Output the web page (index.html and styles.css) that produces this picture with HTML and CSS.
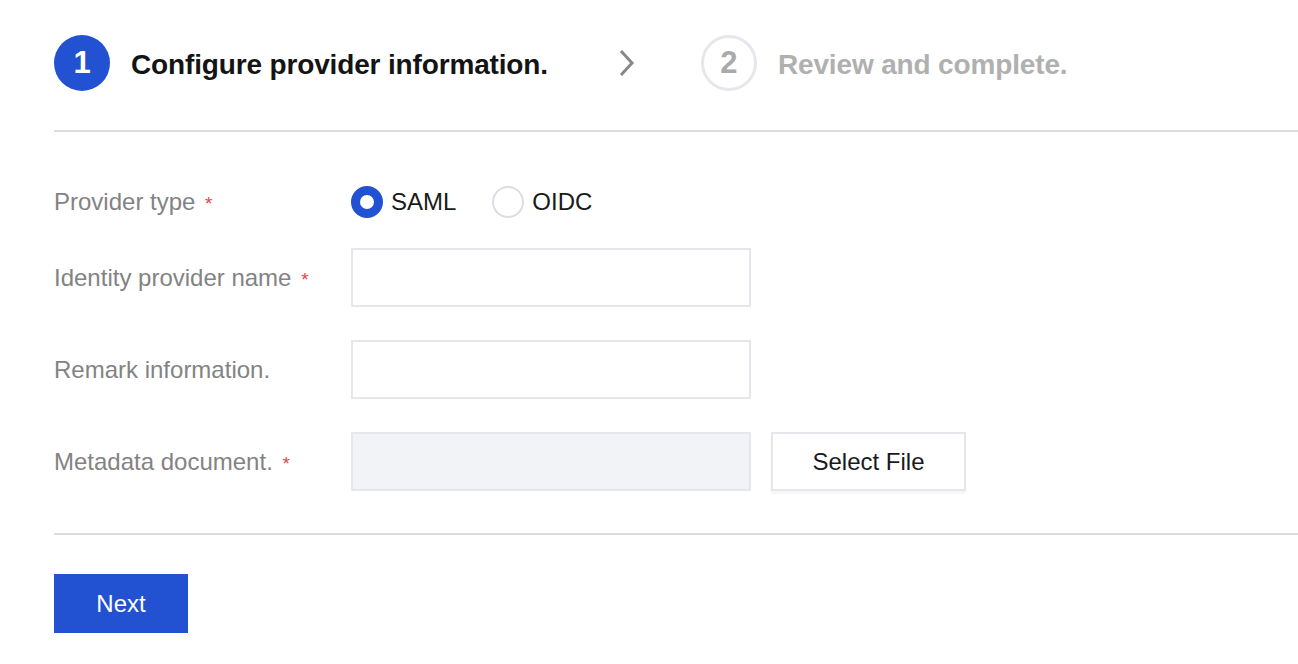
FILE: index.html
```html
<!DOCTYPE html>
<html>
<head>
<meta charset="utf-8">
<link rel="stylesheet" href="styles.css">
</head>
<body>
<div class="page">
  <div class="steps">
    <div class="step active">
      <span class="num">1</span>
      <span class="step-title">Configure provider information.</span>
    </div>
    <svg class="chev" width="16" height="28" viewBox="0 0 16 28"><path d="M2 2 L13 14 L2 26" fill="none" stroke="#888" stroke-width="3"/></svg>
    <div class="step pending">
      <span class="num">2</span>
      <span class="step-title">Review and complete.</span>
    </div>
  </div>
  <div class="divider"></div>
  <form class="form">
    <div class="row row-radio">
      <div class="label">Provider type <span class="req">*</span></div>
      <div class="radios">
        <label class="radio"><span class="dot checked"></span>SAML</label>
        <label class="radio"><span class="dot"></span>OIDC</label>
      </div>
    </div>
    <div class="row">
      <div class="label">Identity provider name <span class="req">*</span></div>
      <div class="input"></div>
    </div>
    <div class="row">
      <div class="label">Remark information.</div>
      <div class="input"></div>
    </div>
    <div class="row">
      <div class="label">Metadata document. <span class="req">*</span></div>
      <div class="input disabled"></div>
      <button type="button" class="btn-file">Select File</button>
    </div>
  </form>
  <div class="divider divider2"></div>
  <button type="button" class="btn-next">Next</button>
</div>
</body>
</html>
```
FILE: styles.css
```css
html, body {
  margin: 0;
  padding: 0;
  background: #fff;
}
body {
  font-family: "Liberation Sans", Arial, sans-serif;
}
.page {
  padding: 35px 0 0 54px;
}
.steps {
  display: flex;
  align-items: center;
  height: 56px;
}
.step {
  display: flex;
  align-items: center;
}
.num {
  box-sizing: border-box;
  width: 56px;
  height: 56px;
  border-radius: 50%;
  display: flex;
  align-items: center;
  justify-content: center;
  font-size: 31px;
  font-weight: bold;
}
.step.active .num {
  background: #2252d2;
  color: #fff;
}
.step.pending .num {
  border: 3px solid #e6e7ec;
  color: #aaa;
}
.step-title {
  margin-left: 21px;
  margin-top: 3px;
  font-size: 28px;
  font-weight: bold;
  letter-spacing: -0.15px;
}
.step.active .step-title {
  color: #141414;
}
.step.pending .step-title {
  color: #b0b0b0;
}
.chev {
  margin-left: 71px;
  margin-right: 66px;
  margin-top: -1px;
}
.divider {
  height: 2px;
  background: #dcdcdc;
  margin-top: 39px;
}
.form {
  padding-top: 50px;
  display: flex;
  flex-direction: column;
  gap: 33px;
}
.row {
  display: flex;
  align-items: center;
  height: 59px;
}
.row-radio {
  height: 40px;
  margin-bottom: -7px;
}
.label {
  width: 297px;
  font-size: 24px;
  color: #838383;
}
.req {
  color: #e54545;
  font-size: 19px;
  margin-left: 3px;
}
.radios {
  display: flex;
  gap: 36px;
}
.radio {
  display: flex;
  align-items: center;
  font-size: 24px;
  color: #1a1a1a;
}
.dot {
  box-sizing: border-box;
  width: 32px;
  height: 32px;
  border-radius: 50%;
  border: 2px solid #dcdde3;
  margin-right: 8px;
  background: #fff;
}
.dot.checked {
  border: 9px solid #2252d2;
}
.input {
  box-sizing: border-box;
  width: 400px;
  height: 59px;
  border: 2px solid #e6e7ec;
  background: #fff;
}
.input.disabled {
  background: #f2f3f7;
}
.btn-file {
  box-sizing: border-box;
  margin-left: 20px;
  width: 195px;
  height: 59px;
  border: 2px solid #e6e7ec;
  background: #fff;
  font-family: "Liberation Sans", Arial, sans-serif;
  font-size: 24px;
  color: #1a1a1a;
  box-shadow: 0 3px 2px rgba(0, 0, 0, 0.04);
  padding: 0;
}
.divider2 {
  margin-top: 42px;
}
.btn-next {
  margin-top: 39px;
  width: 134px;
  height: 59px;
  border: none;
  background: #2252d2;
  color: #fff;
  font-family: "Liberation Sans", Arial, sans-serif;
  font-size: 24px;
  padding: 0;
  box-shadow: 0 2px 0 #f3f4f8;
}
```
